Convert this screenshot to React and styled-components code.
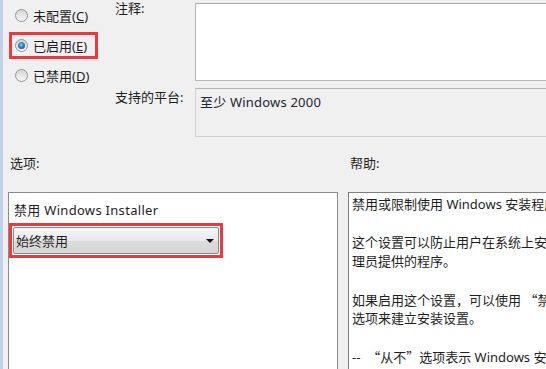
import React from 'react';
import styled, { createGlobalStyle } from 'styled-components';

const red = '#ea3a3e';

const GlobalStyle = createGlobalStyle`
  html, body {
    margin: 0;
    padding: 0;
    background: #f0f0f0;
  }
  body {
    font-family: "Noto Sans", "Noto Sans CJK SC", sans-serif;
    font-size: 13px;
    color: #1e1e1e;
  }
`;

const Page = styled.div`
  box-sizing: border-box;
  width: 546px;
  height: 369px;
  overflow: hidden;
  background: #f0f0f0;
  border-left: 3px solid #bfd4ec;
  display: flex;
  flex-direction: column;
`;

const Top = styled.div`
  display: grid;
  grid-template-columns: 112px 80px 380px;
  grid-template-rows: 81px 49px;
  row-gap: 7px;
`;

const RadioGroup = styled.div`
  grid-row: 1 / span 2;
  display: flex;
  flex-direction: column;
  gap: 3px;
  padding: 2px 0 0 6px;
`;

const RadioRow = styled.label`
  box-sizing: border-box;
  display: flex;
  align-items: center;
  gap: 5px;
  width: 89px;
  height: 27px;
  padding-left: 3px;
  border: 3px solid ${({ $marked }) => ($marked ? red : 'transparent')};
  white-space: nowrap;
`;

const RadioDot = styled.span`
  box-sizing: border-box;
  position: relative;
  flex: none;
  width: 13px;
  height: 13px;
  border-radius: 50%;
  border: 1px solid #939393;
  background: linear-gradient(#d6d6d6, #f7f7f7);

  &::after {
    content: '';
    display: ${({ $checked }) => ($checked ? 'block' : 'none')};
    position: absolute;
    left: 2px;
    top: 2px;
    width: 7px;
    height: 7px;
    border-radius: 50%;
    background: radial-gradient(circle at 45% 40%, #8fd0f5 0%, #2a7fc4 45%, #0f3f77 100%);
  }
`;

const Label = styled.div`
  line-height: 16px;
  padding-top: ${({ $offset }) => $offset || 0}px;
  white-space: nowrap;
`;

const NoteBox = styled.div`
  box-sizing: border-box;
  margin-top: 3px;
  height: 78px;
  background: #fff;
  border: 1px solid #b5b7bd;
  border-top-color: #a4a6ac;
`;

const PlatformBox = styled.div`
  box-sizing: border-box;
  height: 49px;
  padding: 4px 4px;
  line-height: 18px;
  background: #f0f0f0;
  border: 1px solid #cfcfcf;
  border-top-color: #b3b3b3;
  color: #1c2533;
  letter-spacing: 0.2px;
`;

const Lower = styled.div`
  flex: 1;
  min-height: 0;
  margin-top: 18px;
  padding-left: 5px;
  display: grid;
  grid-template-columns: 330px 220px;
  grid-template-rows: 16px 1fr;
  column-gap: 10px;
  row-gap: 21px;
`;

const SectionLabel = styled.div`
  padding-left: 2px;
  line-height: 16px;
`;

const OptionsPanel = styled.div`
  background: #fff;
  border: 1px solid #8c8c8c;
  border-bottom: none;
`;

const OptionTitle = styled.div`
  padding: 8px 5px 0;
  line-height: 18px;
  white-space: nowrap;
  letter-spacing: 0.3px;
`;

const Highlight = styled.div`
  width: fit-content;
  margin-top: 4px;
  padding: 1px;
  border: 3px solid ${red};
`;

const Select = styled.div`
  box-sizing: border-box;
  width: 206px;
  height: 27px;
  display: flex;
  align-items: center;
  justify-content: space-between;
  padding: 0 4px 0 2px;
  border: 1px solid #8a8a8a;
  border-radius: 2px;
  background: linear-gradient(#f6f6f6 0%, #e9e9e9 50%, #dcdcdc 51%, #d6d6d6 100%);
`;

const Arrow = styled.span`
  width: 0;
  height: 0;
  border-left: 4px solid transparent;
  border-right: 4px solid transparent;
  border-top: 4px solid #111;
`;

const HelpPanel = styled.div`
  background: #fff;
  border: 1px solid #7f7f7f;
  border-right: none;
  border-bottom: none;
  padding: 2px 0 0 3px;
  overflow: hidden;
`;

const HelpLine = styled.div`
  height: 19px;
  line-height: 19px;
  white-space: pre;
`;

const Quote = styled.span`
  font-family: "Noto Sans CJK SC", sans-serif;
`;

const radios = [
  { text: '未配置', key: 'C' },
  { text: '已启用', key: 'E', checked: true },
  { text: '已禁用', key: 'D' },
];

const helpLines = [
  ['禁用或限制使用 Windows 安装程序。'],
  [],
  ['这个设置可以防止用户在系统上安装软件，或者只允许安装由系统管'],
  ['理员提供的程序。'],
  [],
  ['如果启用这个设置，可以使用 ', <Quote key="q1">“</Quote>, '禁用 Windows Installer', <Quote key="q2">”</Quote>, '框中的'],
  ['选项来建立安装设置。'],
  [],
  ['--  ', <Quote key="q3">“</Quote>, '从不', <Quote key="q4">”</Quote>, '选项表示 Windows 安装程序完全启用。用户可以安装和'],
  ['升级软件。这是在未配置策略时 Windows 安装程序的默认行为。'],
];

export default function App() {
  return (
    <>
      <GlobalStyle />
      <Page>
        <Top>
          <RadioGroup>
            {radios.map((r) => (
              <RadioRow key={r.key} $marked={r.checked}>
                <RadioDot $checked={r.checked} />
                <span>
                  {r.text}(<u>{r.key}</u>)
                </span>
              </RadioRow>
            ))}
          </RadioGroup>
          <Label>注释:</Label>
          <NoteBox />
          <Label $offset={1}>支持的平台:</Label>
          <PlatformBox>至少 Windows 2000</PlatformBox>
        </Top>
        <Lower>
          <SectionLabel>选项:</SectionLabel>
          <SectionLabel>帮助:</SectionLabel>
          <OptionsPanel>
            <OptionTitle>禁用 Windows Installer</OptionTitle>
            <Highlight>
              <Select>
                <span>始终禁用</span>
                <Arrow />
              </Select>
            </Highlight>
          </OptionsPanel>
          <HelpPanel>
            {helpLines.map((parts, i) => (
              <HelpLine key={i}>{parts}</HelpLine>
            ))}
          </HelpPanel>
        </Lower>
      </Page>
    </>
  );
}
